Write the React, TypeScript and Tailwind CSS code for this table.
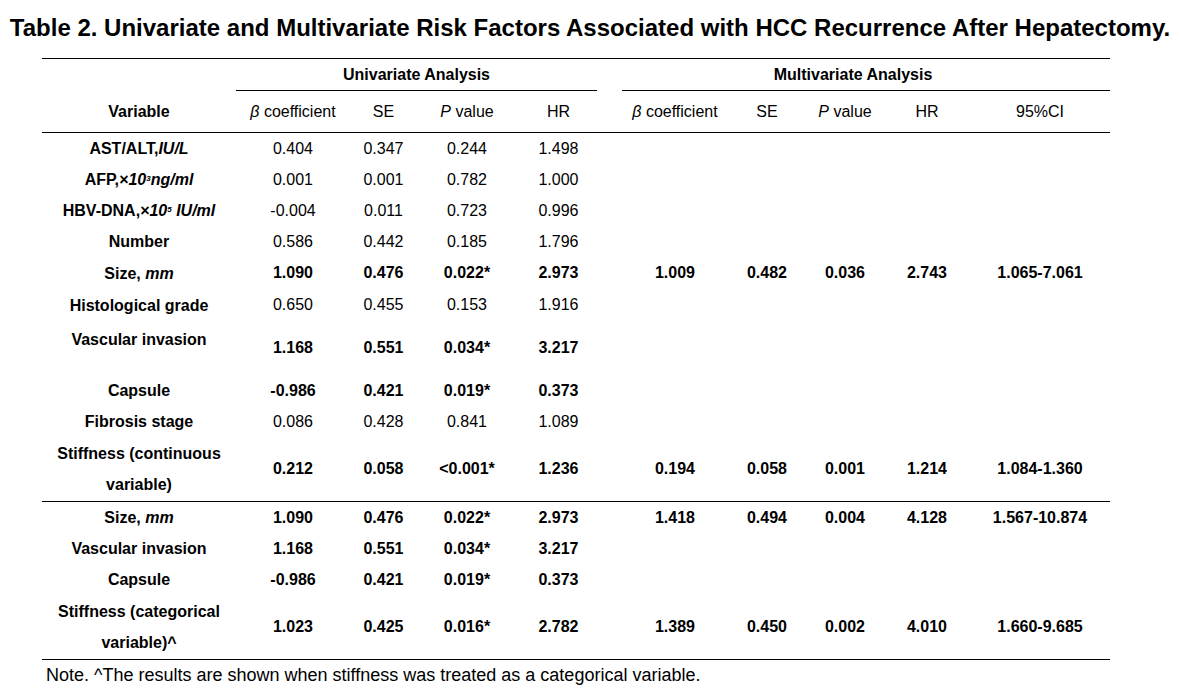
import type { ReactNode } from 'react';

const COLS =
  'grid grid-cols-[194px_114px_67px_100px_83px_22px_106px_78px_78px_86px_140px]';

interface RowProps {
  label: ReactNode;
  uni: string[];
  multi?: string[];
  bold?: boolean;
  h: string;
  labelTop?: boolean;
}

const Row = ({ label, uni, multi, bold, h, labelTop }: RowProps) => (
  <div className={`${COLS} ${h} ${bold ? 'font-bold' : ''}`}>
    <div
      className={`font-bold flex justify-center text-center leading-[31px] ${
        labelTop ? 'items-start pt-[3px]' : 'items-center'
      }`}
    >
      <span>{label}</span>
    </div>
    {uni.map((v, i) => (
      <div key={i} className="flex items-center justify-center">
        {v}
      </div>
    ))}
    <div />
    {multi
      ? multi.map((v, i) => (
          <div key={i} className="flex items-center justify-center font-bold">
            {v}
          </div>
        ))
      : [0, 1, 2, 3, 4].map(i => <div key={i} />)}
  </div>
);

const App = () => {
  return (
    <div className="w-[1180px] h-[689px] bg-white text-black font-['Liberation_Sans',Arial,sans-serif] text-[16px] overflow-hidden">
      <h1 className="pt-[14px] text-center text-[24px] leading-[28px] font-bold whitespace-nowrap">
        Table 2. Univariate and Multivariate Risk Factors Associated with HCC Recurrence After Hepatectomy.
      </h1>

      <div className="mt-[16px] ml-[42px] w-[1068px]">
        {/* header */}
        <div className="border-t border-black">
          <div className={`${COLS} h-[32px]`}>
            <div />
            <div className="col-span-4 mr-[3px] border-b border-black flex items-center justify-center font-bold">
              Univariate Analysis
            </div>
            <div />
            <div className="col-span-5 border-b border-black flex items-center justify-center pr-[26px] font-bold">
              Multivariate Analysis
            </div>
          </div>
          <div className={`${COLS} h-[42px] border-b border-black`}>
            <div className="flex items-center justify-center font-bold">Variable</div>
            <div className="flex items-center justify-center"><i>β</i>&nbsp;coefficient</div>
            <div className="flex items-center justify-center">SE</div>
            <div className="flex items-center justify-center"><i>P</i>&nbsp;value</div>
            <div className="flex items-center justify-center">HR</div>
            <div />
            <div className="flex items-center justify-center"><i>β</i>&nbsp;coefficient</div>
            <div className="flex items-center justify-center">SE</div>
            <div className="flex items-center justify-center"><i>P</i>&nbsp;value</div>
            <div className="flex items-center justify-center">HR</div>
            <div className="flex items-center justify-center">95%CI</div>
          </div>
        </div>

        {/* first block */}
        <div className="border-b border-black">
          <Row h="h-[31px]" label={<>AST/ALT,<i>IU/L</i></>} uni={['0.404', '0.347', '0.244', '1.498']} />
          <Row
            h="h-[31px]"
            label={<>AFP,<i>×10<sup className="text-[8px]">3</sup>ng/ml</i></>}
            uni={['0.001', '0.001', '0.782', '1.000']}
          />
          <Row
            h="h-[31px]"
            label={<>HBV-DNA,<i>×10<sup className="text-[8px]">5</sup> IU/ml</i></>}
            uni={['-0.004', '0.011', '0.723', '0.996']}
          />
          <Row h="h-[31px]" label="Number" uni={['0.586', '0.442', '0.185', '1.796']} />
          <Row
            h="h-[32px]"
            bold
            label={<>Size, <i>mm</i></>}
            uni={['1.090', '0.476', '0.022*', '2.973']}
            multi={['1.009', '0.482', '0.036', '2.743', '1.065-7.061']}
          />
          <Row h="h-[32px]" label="Histological grade" uni={['0.650', '0.455', '0.153', '1.916']} />
          <Row h="h-[54px]" bold labelTop label="Vascular invasion" uni={['1.168', '0.551', '0.034*', '3.217']} />
          <Row h="h-[31px]" bold label="Capsule" uni={['-0.986', '0.421', '0.019*', '0.373']} />
          <Row h="h-[31px]" label="Fibrosis stage" uni={['0.086', '0.428', '0.841', '1.089']} />
          <Row
            h="h-[64px]"
            bold
            label={<>Stiffness (continuous<br />variable)</>}
            uni={['0.212', '0.058', '<0.001*', '1.236']}
            multi={['0.194', '0.058', '0.001', '1.214', '1.084-1.360']}
          />
        </div>

        {/* second block */}
        <div className="border-b border-black">
          <Row
            h="h-[31px]"
            bold
            label={<>Size, <i>mm</i></>}
            uni={['1.090', '0.476', '0.022*', '2.973']}
            multi={['1.418', '0.494', '0.004', '4.128', '1.567-10.874']}
          />
          <Row h="h-[31px]" bold label="Vascular invasion" uni={['1.168', '0.551', '0.034*', '3.217']} />
          <Row h="h-[31px]" bold label="Capsule" uni={['-0.986', '0.421', '0.019*', '0.373']} />
          <Row
            h="h-[64px]"
            bold
            label={<>Stiffness (categorical<br />variable)^</>}
            uni={['1.023', '0.425', '0.016*', '2.782']}
            multi={['1.389', '0.450', '0.002', '4.010', '1.660-9.685']}
          />
        </div>
      </div>

      <p className="ml-[46px] mt-[3px] text-[18px] leading-[24px]">
        Note. ^The results are shown when stiffness was treated as a categorical variable.
      </p>
    </div>
  );
};

export default App;
